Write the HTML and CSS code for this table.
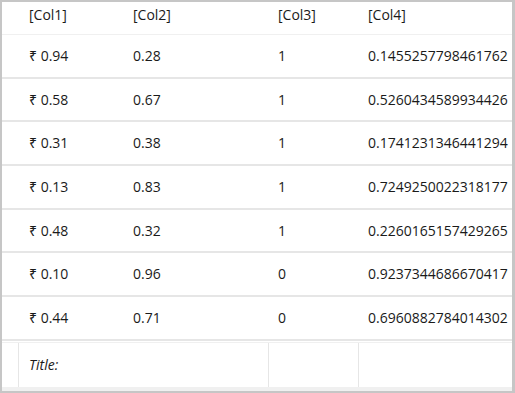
FILE: index.html
```html
<!DOCTYPE html>
<html>
<head>
<meta charset="utf-8">
<link rel="stylesheet" href="styles.css">
</head>
<body>
<div class="grid">
  <div class="row head">
    <div class="gap"></div>
    <div class="cell">[Col1]</div>
    <div class="cell">[Col2]</div>
    <div class="cell">[Col3]</div>
    <div class="cell">[Col4]</div>
  </div>
  <div class="row"><div class="gap"></div><div class="cell">₹ 0.94</div><div class="cell">0.28</div><div class="cell">1</div><div class="cell">0.1455257798461762</div></div>
  <div class="row"><div class="gap"></div><div class="cell">₹ 0.58</div><div class="cell">0.67</div><div class="cell">1</div><div class="cell">0.5260434589934426</div></div>
  <div class="row"><div class="gap"></div><div class="cell">₹ 0.31</div><div class="cell">0.38</div><div class="cell">1</div><div class="cell">0.1741231346441294</div></div>
  <div class="row"><div class="gap"></div><div class="cell">₹ 0.13</div><div class="cell">0.83</div><div class="cell">1</div><div class="cell">0.7249250022318177</div></div>
  <div class="row"><div class="gap"></div><div class="cell">₹ 0.48</div><div class="cell">0.32</div><div class="cell">1</div><div class="cell">0.2260165157429265</div></div>
  <div class="row"><div class="gap"></div><div class="cell">₹ 0.10</div><div class="cell">0.96</div><div class="cell">0</div><div class="cell">0.9237344686670417</div></div>
  <div class="row"><div class="gap"></div><div class="cell">₹ 0.44</div><div class="cell">0.71</div><div class="cell">0</div><div class="cell">0.6960882784014302</div></div>
  <div class="foot">
    <div class="gap"></div>
    <div class="fcell title">Title:</div>
    <div class="fcell"></div>
    <div class="fcell"></div>
  </div>
</div>
</body>
</html>
```
FILE: styles.css
```css
html, body {
  margin: 0;
  padding: 0;
  background: #ffffff;
}
.grid {
  box-sizing: border-box;
  width: 515px;
  height: 393px;
  border-style: solid;
  border-color: #c6c6c6;
  border-width: 2px 3px 2px 2px;
  display: flex;
  flex-direction: column;
  overflow: hidden;
  font-family: "Open Sans", "Noto Sans", "DejaVu Sans", sans-serif;
  font-size: 14px;
  color: #1a1a1a;
}
.row {
  box-sizing: border-box;
  display: grid;
  grid-template-columns: 17px 104px 145px 90px 1fr;
  align-items: center;
  height: 43.7px;
  flex: none;
  border-bottom: 2px solid #e6e6e6;
}
.row.head {
  height: 33px;
  align-items: start;
  padding-top: 3px;
  border-bottom: 1px solid #f0f0f0;
}
.cell {
  padding-left: 10px;
  line-height: 20px;
  white-space: nowrap;
}
.foot {
  box-sizing: border-box;
  flex: 1;
  margin-top: 1px;
  display: grid;
  grid-template-columns: 16px 250px 90px 1fr;
  border-top: 1px solid #f0f0f0;
  border-bottom: 4px solid #f0f0f0;
}
.fcell {
  border-left: 1px solid #e6e6e6;
  display: flex;
  align-items: center;
  padding-left: 10px;
}
.title {
  font-style: italic;
}
```
